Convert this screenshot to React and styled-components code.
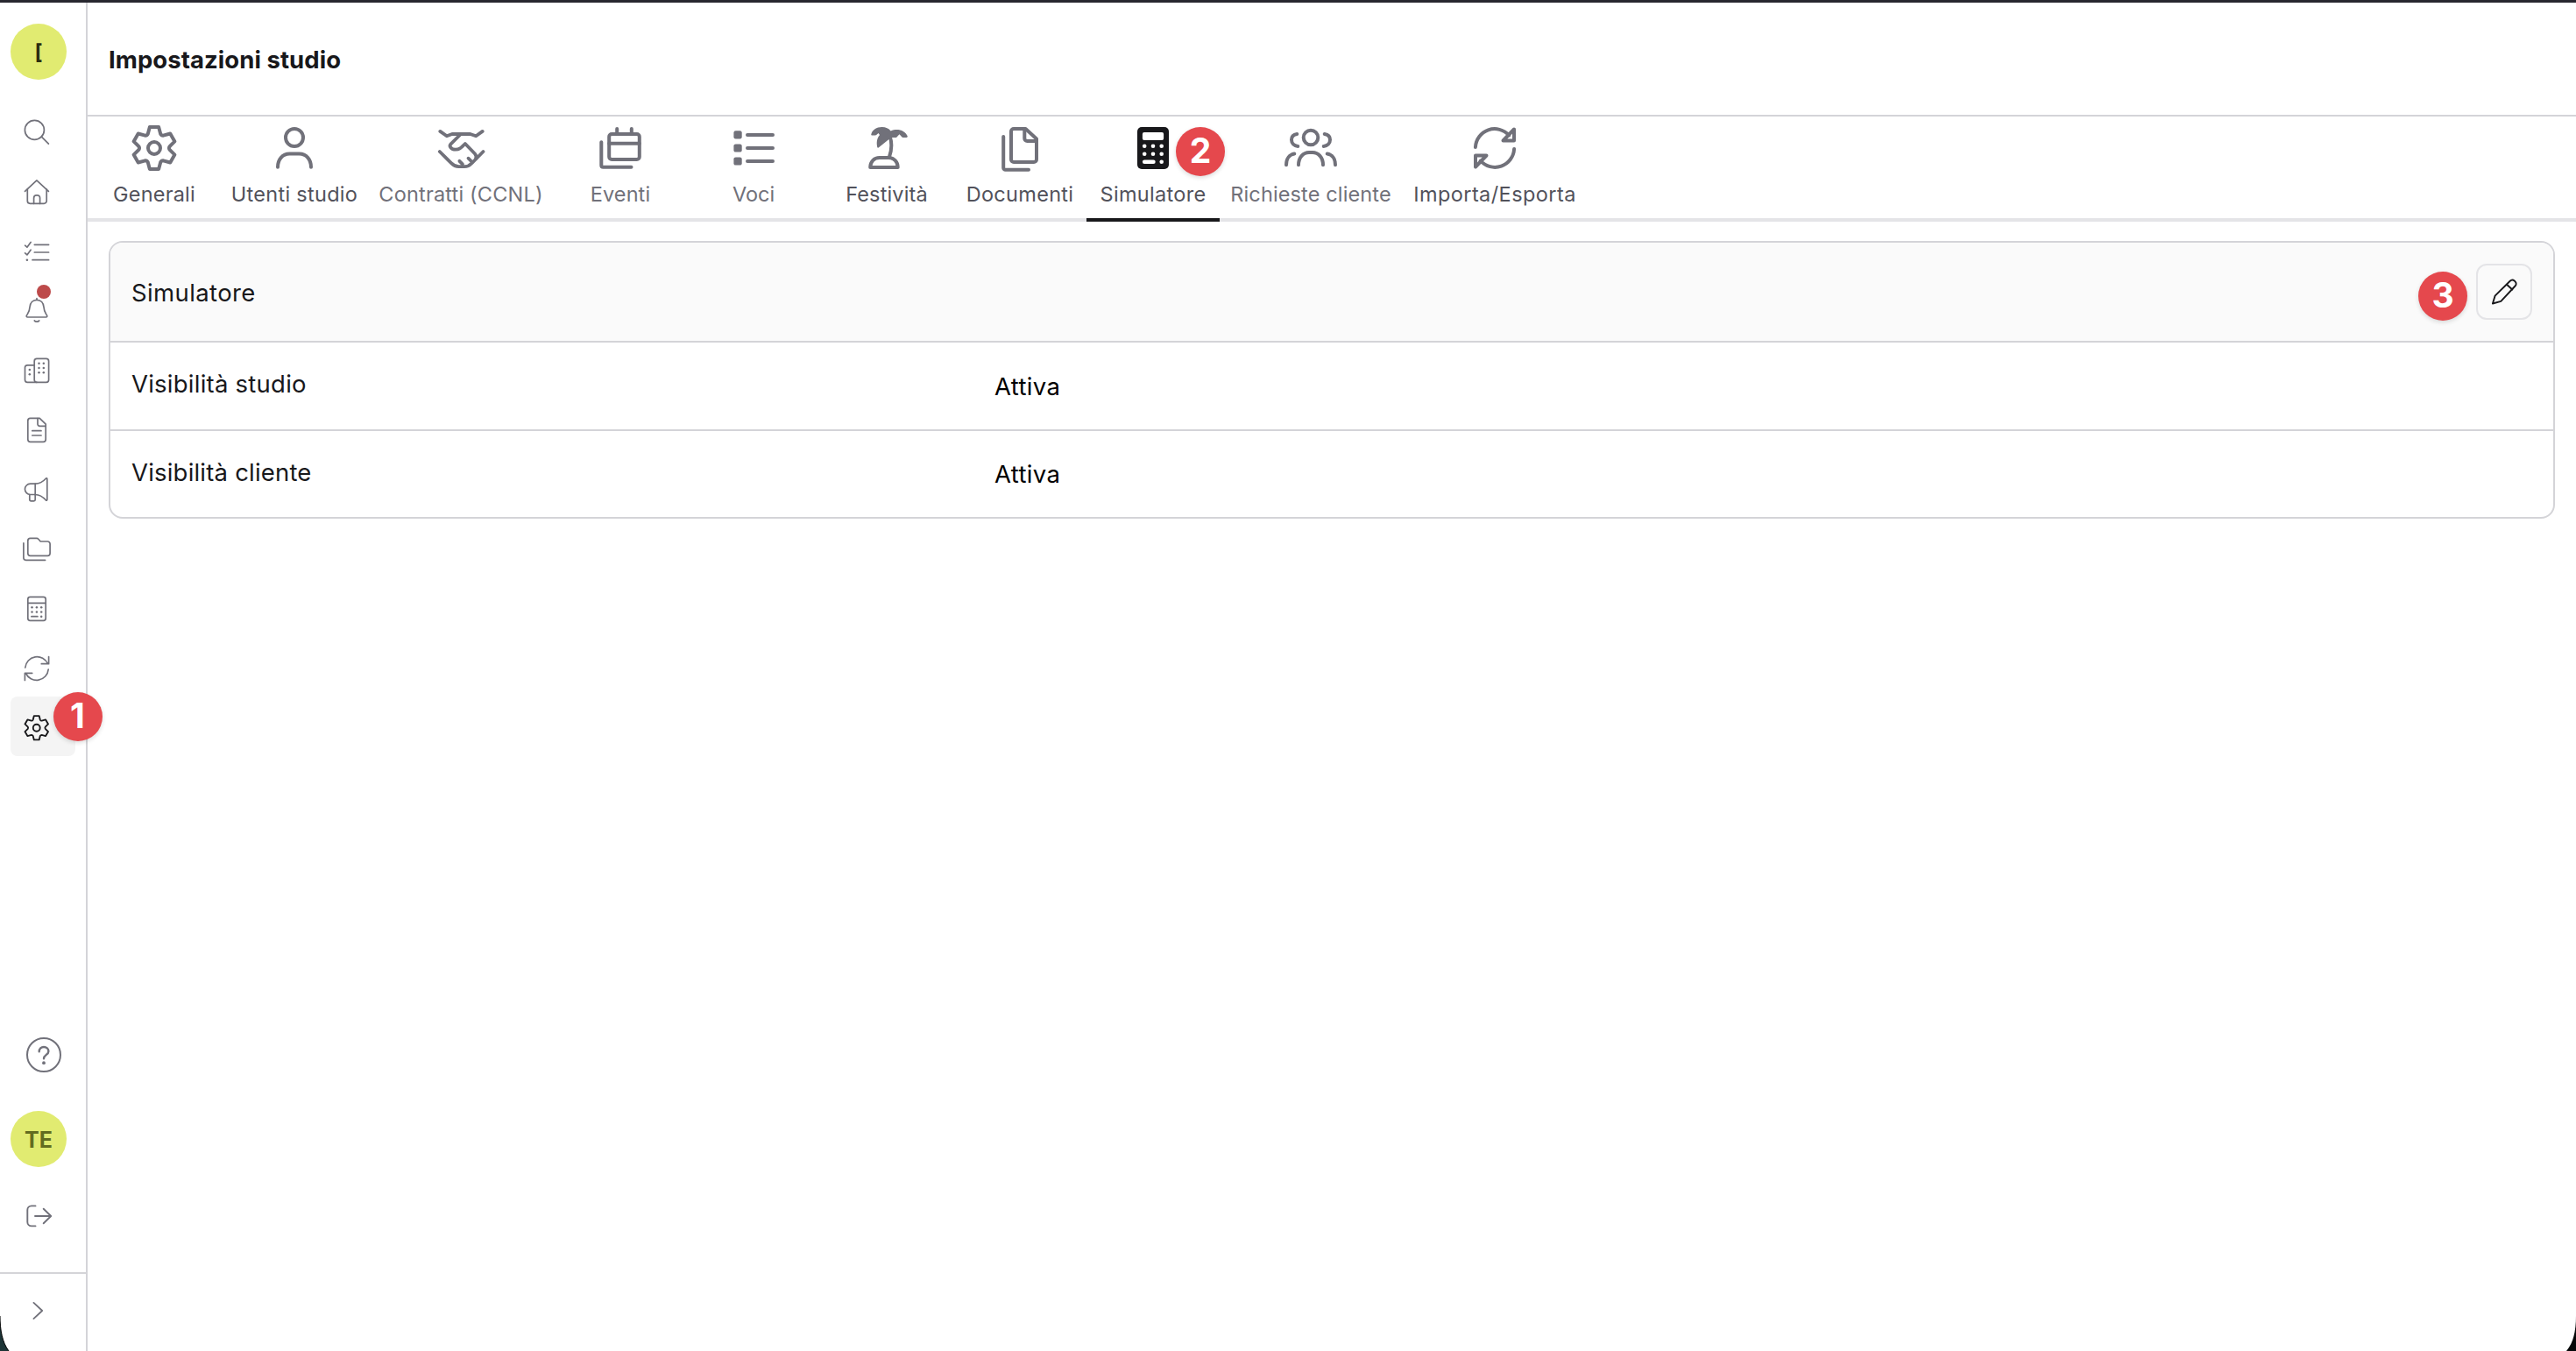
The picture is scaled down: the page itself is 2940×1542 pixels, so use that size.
import React from 'react';
import styled, { createGlobalStyle } from 'styled-components';

const GlobalStyle = createGlobalStyle`
  * { box-sizing: border-box; }
  html, body { margin: 0; padding: 0; background: #fff; }
  body { font-family: Inter, "Noto Sans", sans-serif; color: #18181b; overflow: hidden; }
`;

/* ---------- icons ---------- */

const Svg = styled.svg`
  display: block;
  flex: none;
  overflow: visible;
  fill: none;
  stroke: currentColor;
  stroke-width: ${(p) => p.$stroke};
  stroke-linecap: round;
  stroke-linejoin: round;
`;

const Small = ({ children, stroke = 1.7, size = 32 }) => (
  <Svg width={size} height={size} viewBox={`0 0 ${size} ${size}`} $stroke={stroke}>{children}</Svg>
);
const Large = ({ children, stroke = 4 }) => (
  <Svg width={52} height={52} viewBox="0 0 52 52" $stroke={stroke}>{children}</Svg>
);
const Dots = ({ points, r = 1.25 }) => (
  <g fill="currentColor" stroke="none">
    {points.map(([x, y]) => <circle key={`${x}-${y}`} cx={x} cy={y} r={r} />)}
  </g>
);

const polar = (r, deg) => {
  const a = (deg * Math.PI) / 180;
  return `${(26 + r * Math.sin(a)).toFixed(2)} ${(26 - r * Math.cos(a)).toFixed(2)}`;
};
const gearPath = `${[0, 60, 120, 180, 240, 300]
  .map((a, i) => `${i ? 'L' : 'M'}${polar(24.6, a - 12)} L${polar(24.6, a + 12)} L${polar(17.7, a + 24)} Q${polar(16.4, a + 30)} ${polar(17.7, a + 36)}`)
  .join(' ')} Z`;

const GearShape = () => (<><path d={gearPath} /><circle cx="26" cy="26" r="7" /></>);
const SmallGear = () => (
  <Svg width={29.5} height={29.5} viewBox="0 0 52 52" $stroke={3.3}><GearShape /></Svg>
);

const SearchIcon = () => (
  <Small><circle cx="13.4" cy="13.4" r="11" /><path d="M21.4 21.2 29.4 29.2" /></Small>
);
const HomeIcon = () => (
  <Small>
    <path d="M2.5 15.3 15.9 2.8 29.4 15.3" />
    <path d="M5.3 13v13.3a3 3 0 0 0 3 3h15.9a3 3 0 0 0 3-3V13" />
    <path d="M12.6 29.3v-6.4a3.1 3.1 0 0 1 3.1-3.1h.8a3.1 3.1 0 0 1 3.1 3.1v6.4" />
  </Small>
);
const ChecklistIcon = () => (
  <Small>
    <path d="M2.6 9.2 4.9 11.2 9.1 5.5M13.3 8.3H29.6M2.6 17.9 4.9 19.9 9.1 14.2M13.3 17H29.6M11 25.7H29.6" />
    <Dots points={[[4.9, 25.7]]} r={1.3} />
  </Small>
);
const BellIcon = () => (
  <Small>
    <path d="M16 1.7v1.6M16 3.3c-4.6 0-7.6 3.3-8 8.2-.2 5-1.9 6.7-3.5 9.4-.7 1.2-.1 2.1 1 2.1h21c1.1 0 1.7-.9 1-2.1-1.6-2.7-3.300-4.400-3.500-9.400-.4-4.900-3.400-8.200-8-8.200Z" />
    <path d="M13.300 27c1 1.600 4.400 1.600 5.400 0" />
  </Small>
);
const BuildingsIcon = () => (
  <Small>
    <rect x="13.2" y="2.4" width="16.4" height="26.9" rx="2.8" />
    <path d="M13.2 9.8H5.3a2.8 2.8 0 0 0-2.8 2.8v13.9a2.8 2.8 0 0 0 2.8 2.8H16" />
    <Dots points={[[18.5, 7.7], [23.8, 7.7], [18.5, 13], [23.8, 13], [18.5, 18.3], [23.8, 18.3], [7.8, 15], [7.8, 20.3]]} />
  </Small>
);
const DocumentIcon = () => (
  <Small>
    <path d="M8.6 2.4H19.2L26.2 9.2V26.5a2.8 2.8 0 0 1-2.8 2.8H8.6a2.8 2.8 0 0 1-2.8-2.8V5.2a2.8 2.8 0 0 1 2.8-2.8Z" />
    <path d="M17 2.6V9a2.3 2.3 0 0 0 2.3 2.3H26" />
    <path d="M10.8 16.7H21M10.8 22H21" />
  </Small>
);
const MegaphoneIcon = () => (
  <Small>
    <path d="M14.2 9.2H8.6a6.15 6.15 0 0 0 0 12.3H14.2Z" />
    <path d="M14.2 9.2C19.5 9 23.5 6.3 26.3 3.2c.6-.6 1.5-.3 1.5.5V27.3c0 .8-.9 1.1-1.5.5C23.5 24.7 19.5 21.700 14.200 21.500" />
    <path d="M7.800 21.500v5.700a1.600 1.600 0 0 0 1.600 1.600h3.200a1.600 1.600 0 0 0 1.600-1.600v-5.700" />
  </Small>
);
const FoldersIcon = () => (
  <Small>
    <path d="M8.6 3.4H16c.8 0 1.3.3 1.8.9L20.2 7H28.3a2.8 2.8 0 0 1 2.8 2.8V20.5a2.8 2.8 0 0 1-2.8 2.8H8.6a2.8 2.8 0 0 1-2.8-2.8V6.2a2.8 2.8 0 0 1 2.8-2.8Z" />
    <path d="M.9 8.9V25.6a2.7 2.7 0 0 0 2.7 2.7H25.6" />
  </Small>
);
const CalculatorIcon = () => (
  <Small>
    <rect x="5.8" y="2.4" width="20.4" height="26.9" rx="2.6" />
    <path d="M5.8 9.4H26.2M9.9 24.7H16.9" />
    <Dots points={[[10.5, 14.3], [15.9, 14.3], [21.2, 14.3], [10.5, 19.6], [15.9, 19.6], [21.2, 19.6], [21.2, 24.7]]} />
  </Small>
);
const RefreshIcon = () => (
  <Small>
    <path d="M2.8 15A13.5 13.5 0 0 1 28.6 10.7M29.6 2.6V10.7H21.3" />
    <path d="M29.2 17A13.5 13.5 0 0 1 3.4 21.3M2.4 29.4V21.3H10.7" />
  </Small>
);
const HelpIcon = () => (
  <Small size={40} stroke={2}>
    <circle cx="20" cy="20" r="19" />
    <path strokeWidth="2.4" d="M14.7 16.3C14.7 12.8 17 11 20 11s5.4 1.9 5.4 4.9c0 4-5.4 4-5.4 8.3" />
    <Dots points={[[20, 29.2]]} r={1.9} />
  </Small>
);
const LogoutIcon = () => (
  <Small stroke={1.9}>
    <path d="M12.5 4.4H8A4.7 4.7 0 0 0 3.3 9.1V22.7A4.7 4.7 0 0 0 8 27.4H12.5" />
    <path d="M12 16H30M21.7 7.7 30.2 16 21.7 24.3" />
  </Small>
);
const ChevronIcon = () => <Small stroke={1.8}><path d="M11.4 6.9 21.2 16 11.4 25.1" /></Small>;
const PencilIcon = () => (
  <Small stroke={1.9}>
    <path d="M2.9 29.5 5.6 20.6 22.7 3.7c1.5-1.5 3.5-1.6 5-.2l.9.9c1.5 1.5 1.4 3.6-.1 5.1L12.3 26.8Z" />
    <path d="M19 7.7 25.3 13.5" />
  </Small>
);

const TabGear = () => <Large><GearShape /></Large>;
const TabUser = () => (
  <Large><circle cx="26" cy="14" r="10" /><path d="M7 47.8C7 38.8 12.5 32.6 20.5 32.6h11C39.5 32.6 45 38.8 45 47.8" /></Large>
);
const TabHandshake = () => (
  <Large stroke={3.8}>
    <path d="M2.3 6.9 9.9 12.3 16 10H36.7L43.2 12.3 50.7 6.9" />
    <path d="M26 10 14.5 21.3C12 24 15 27.7 20 27.7 24 27.7 25.5 26.5 30.9 21L42 32.5C43.700 34.500 44 35.500 43.100 38" />
    <path d="M1.800 30 15 43.200C17.700 46 20 47.200 23.500 47.200H30C33.500 47.200 35.800 46 38.500 43.200L51.500 30" />
    <path d="M24.400 40.800 27.900 44.300M34.500 37.700 38.800 42" />
  </Large>
);
const TabEvents = () => (
  <Large>
    <rect x="13.2" y="10" width="34.6" height="29" rx="3" />
    <path d="M13.2 20.7H47.8M22.2 4V10M38.8 4V10M4.3 19.3V45.7a2 2 0 0 0 2 2H38.5" />
  </Large>
);
const TabList = () => (
  <Large>
    <g fill="currentColor" stroke="none">
      <rect x="3.4" y="6.3" width="9.3" height="9.2" rx="2.2" />
      <rect x="3.4" y="21.4" width="9.3" height="9.2" rx="2.2" />
      <rect x="3.4" y="36.4" width="9.3" height="9.2" rx="2.2" />
    </g>
    <path d="M19 11H48M19 26H48M19 41H48" />
  </Large>
);
const TabPalm = () => (
  <Large>
    <path d="M7.2 48c0-6.5 4.5-11 10.5-11h10.5c6 0 10.5 4.5 10.5 11Z" />
    <path d="M29.8 13C32 20 31.8 28 29 36" />
    <path fill="currentColor" stroke="none" d="M8.3 10.2C9.5 5 14.5 1.9 20.5 1.9 25 1.9 28.5 3.4 30.6 6.4 38 3 47 5.5 49.7 12.3 50 13.3 49.4 13.9 48.6 13.9H44.8C44 13.9 43.5 13.6 43 13L40.5 10.2 37 13.9H31L17 25.3C16.3 26 15.3 25.7 15.2 24.8 14 19 15 14.5 18 11L16.5 9 14.5 10.8C14 11.4 13.5 11.5 12.8 11.5H9.3C8.6 11.5 8.1 11 8.3 10.2Z" />
  </Large>
);
const TabDocuments = () => (
  <Large>
    <path d="M19 4H32.5L45 15.5V39a3 3 0 0 1-3 3H19a3 3 0 0 1-3-3V7a3 3 0 0 1 3-3Z" />
    <path d="M31.3 4.5V15a3 3 0 0 0 3 3H44.5" />
    <path d="M7.2 13V48.5a2.3 2.3 0 0 0 2.3 2.3H36" />
  </Large>
);
const TabCalculator = () => (
  <Large>
    <rect x="8" y="2" width="36" height="48" rx="5" fill="currentColor" stroke="none" />
    <g fill="#fff" stroke="none">
      <rect x="13.9" y="8" width="24.2" height="9" rx="2" />
      {[23.7, 32.7].map((y) => [16.2, 26, 35.7].map((x) => <circle key={`${x}${y}`} cx={x} cy={y} r="2.3" />))}
      <rect x="13.9" y="39.5" width="14.8" height="4.6" rx="2.3" />
      <circle cx="35.7" cy="41.8" r="2.3" />
    </g>
  </Large>
);
const TabPeople = () => (
  <Large>
    <circle cx="26" cy="14" r="8.3" />
    <path d="M12 45.3C12 36.5 17.5 31 24 31h4c6.5 0 12 5.5 12 14.3" />
    <path d="M10.3 9.9C6.4 10.4 4 13 4 16.6c0 4 3 7 7.3 7.3M41.7 9.9c3.9.5 6.3 3.1 6.3 6.7 0 4-3 7-7.3 7.3" />
    <path d="M-2 45.3C-2 38.5 1.5 33.5 7.3 32.6M54 45.3c0-6.8-3.5-11.8-9.3-12.7" />
  </Large>
);
const TabSync = () => (
  <Large>
    <path d="M3.9 25A22 22 0 0 1 42.3 11.5M48 4.5V17.5H35.5Z" />
    <path d="M48.1 27A22 22 0 0 1 9.7 40.5M4 47.5V34.5H16.5Z" />
  </Large>
);

/* ---------- layout ---------- */

const Window = styled.div`
  position: relative;
  display: flex;
  width: 2940px;
  height: 1542px;
  border-top: 3px solid #28272f;
  background: #fff;
  overflow: hidden;
`;

const Sidebar = styled.aside`
  display: flex;
  flex-direction: column;
  width: 100px;
  flex: none;
  border-right: 2px solid #d4d4d8;
  color: #71717a;
`;

const Avatar = styled.div`
  display: flex;
  align-items: center;
  justify-content: center;
  width: 64px;
  height: 64px;
  flex: none;
  margin-left: 12px;
  padding-top: 2px;
  border-radius: 50%;
  background: #e1eb71;
  color: ${(p) => p.$color};
  font-size: ${(p) => p.$size}px;
  font-weight: 700;
  line-height: 1;
`;

const StudioAvatar = styled(Avatar)`
  margin-top: 24px;
`;

const Nav = styled.nav`
  display: flex;
  flex-direction: column;
  margin: 24px 0 0 12px;
`;

const NavItem = styled.a`
  position: relative;
  display: flex;
  align-items: center;
  justify-content: center;
  width: 74px;
  height: 68px;
  padding: 4px 14px 0 0;
  border-radius: 8px;
  background: ${(p) => (p.$active ? '#f4f4f4' : 'transparent')};
  color: ${(p) => (p.$active ? '#18181b' : '#71717a')};
`;

const Unread = styled.span`
  position: absolute;
  left: 30px;
  top: 6px;
  width: 16px;
  height: 16px;
  border-radius: 50%;
  background: #bd4a4a;
`;

const Step = styled.span`
  position: absolute;
  z-index: 2;
  left: ${(p) => p.$left}px;
  top: ${(p) => p.$top}px;
  display: flex;
  align-items: center;
  justify-content: center;
  width: 56px;
  height: 56px;
  border-radius: 50%;
  background: #e5484d;
  box-shadow: 0 2px 5px rgba(0, 0, 0, 0.14);
  color: #fff;
  font-size: 39px;
  font-weight: 700;
  line-height: 54px;
  padding-bottom: 2px;
`;

const SidebarFooter = styled.div`
  display: flex;
  flex-direction: column;
  align-items: flex-start;
  margin-top: auto;
`;

const IconSlot = styled.div`
  display: flex;
  padding: ${(p) => p.$pad};
`;

const Collapse = styled.div`
  width: 98px;
  height: 90px;
  border-top: 2px solid #d4d4d8;
  padding: 26px 0 0 27px;
`;

const Main = styled.main`
  flex: 1;
  min-width: 0;
`;

const PageHeader = styled.header`
  display: flex;
  align-items: center;
  height: 130px;
  padding: 2px 0 0 24px;
  border-bottom: 2px solid #d4d4d8;
`;

const Title = styled.h1`
  margin: 0;
  font-size: 27.5px;
  font-weight: 700;
  line-height: 36px;
  letter-spacing: 0.06px;
`;

const Tabs = styled.div`
  display: flex;
  height: 120px;
  box-shadow: inset 0 -4px 0 #e4e4e7;
`;

const Tab = styled.div`
  position: relative;
  display: flex;
  flex-direction: column;
  align-items: center;
  width: ${(p) => p.$width}px;
  padding-top: 10px;
  border-bottom: 4px solid ${(p) => (p.$active ? '#18181b' : 'transparent')};
  color: ${(p) => (p.$active ? '#18181b' : '#71717a')};
`;

const TabLabel = styled.span`
  margin-top: 12px;
  color: ${(p) => (p.$muted ? '#71717a' : '#52525b')};
  font-size: 23.5px;
  line-height: 30px;
  letter-spacing: ${(p) => p.$track || 0}px;
  white-space: nowrap;
`;

const Card = styled.section`
  margin: 22px 24px 0;
  border: 2px solid #d4d4d8;
  border-radius: 16px;
  overflow: hidden;
`;

const CardHeader = styled.div`
  position: relative;
  display: flex;
  align-items: center;
  justify-content: space-between;
  height: 112px;
  padding: 0 24px;
  background: #fafafa;
`;

const Label = styled.span`
  font-size: 27.5px;
  line-height: 36px;
  letter-spacing: ${(p) => p.$track || 0}px;
`;

const CardTitle = styled(Label)`
  padding-top: 2px;
`;

const Row = styled.div`
  display: grid;
  grid-template-columns: 985px 1fr;
  align-items: center;
  height: ${(p) => p.$height}px;
  padding: 0 24px;
  border-top: 2px solid #d4d4d8;
  & > ${Label}:first-child { padding-bottom: 5px; }
`;

const Value = styled(Label)`
  color: #000;
`;

const EditButton = styled.button`
  display: flex;
  align-items: center;
  justify-content: center;
  width: 64px;
  height: 64px;
  padding: 0;
  border: 2px solid #e4e4e7;
  border-radius: 12px;
  background: #fafafa;
  color: #18181b;
`;

const Corner = styled.svg`
  position: absolute;
  bottom: 0;
  ${(p) => (p.$right ? 'right: 0; transform: scaleX(-1);' : 'left: 0;')}
`;

const navItems = [
  SearchIcon, HomeIcon, ChecklistIcon, BellIcon, BuildingsIcon, DocumentIcon,
  MegaphoneIcon, FoldersIcon, CalculatorIcon, RefreshIcon, SmallGear,
];

const tabs = [
  { label: 'Generali', icon: TabGear, width: 152, track: 0.2 },
  { label: 'Utenti studio', icon: TabUser, width: 168, track: 0.28 },
  { label: 'Contratti (CCNL)', icon: TabHandshake, width: 212, track: 0.18, muted: true },
  { label: 'Eventi', icon: TabEvents, width: 152, track: 0.1, muted: true },
  { label: 'Voci', icon: TabList, width: 152, track: 0, muted: true },
  { label: 'Festività', icon: TabPalm, width: 152, track: 0.15 },
  { label: 'Documenti', icon: TabDocuments, width: 152, track: 0.3 },
  { label: 'Simulatore', icon: TabCalculator, width: 152, track: 0.3, active: true },
  { label: 'Richieste cliente', icon: TabPeople, width: 208, track: 0.13, muted: true },
  { label: 'Importa/Esporta', icon: TabSync, width: 212, track: 0.42 },
];

export default function App() {
  return (
    <>
      <GlobalStyle />
      <Window>
        <Sidebar>
          <StudioAvatar $color="#2b2d10" $size={24}>[</StudioAvatar>
          <Nav>
            {navItems.map((Icon, i) => (
              <NavItem key={i} $active={Icon === SmallGear}>
                <Icon />
                {Icon === BellIcon && <Unread />}
                {Icon === SmallGear && <Step $left={48.5} $top={-5}>1</Step>}
              </NavItem>
            ))}
          </Nav>
          <SidebarFooter>
            <IconSlot $pad="0 0 44px 30px"><HelpIcon /></IconSlot>
            <Avatar $color="#626c20" $size={25}>TE</Avatar>
            <IconSlot $pad="40px 0 48px 28px"><LogoutIcon /></IconSlot>
            <Collapse><ChevronIcon /></Collapse>
          </SidebarFooter>
        </Sidebar>
        <Main>
          <PageHeader><Title>Impostazioni studio</Title></PageHeader>
          <Tabs>
            {tabs.map(({ label, icon: Icon, width, track, muted, active }) => (
              <Tab key={label} $width={width} $active={active}>
                <Icon />
                <TabLabel $muted={muted} $track={track}>{label}</TabLabel>
                {active && <Step $left={102} $top={12}>2</Step>}
              </Tab>
            ))}
          </Tabs>
          <Card>
            <CardHeader>
              <CardTitle $track={0.38}>Simulatore</CardTitle>
              <EditButton aria-label="Modifica"><PencilIcon /></EditButton>
              <Step $left={2634} $top={33}>3</Step>
            </CardHeader>
            <Row $height={101}><Label $track={0.24}>Visibilità studio</Label><Value $track={0.35}>Attiva</Value></Row>
            <Row $height={100}><Label $track={0.2}>Visibilità cliente</Label><Value $track={0.35}>Attiva</Value></Row>
          </Card>
        </Main>
        <Corner width="12" height="40" viewBox="0 0 12 40">
          <path d="M0 0C0 16 2.500 30 10 40H0Z" fill="#1d3436" />
          <path d="M0 0C0 16 2.500 30 10 40" fill="none" stroke="#000" strokeWidth="1" />
        </Corner>
        <Corner $right width="12" height="40" viewBox="0 0 12 40">
          <path d="M0 0C0 16 2.500 30 11 40H0Z" fill="#050708" />
        </Corner>
      </Window>
    </>
  );
}
